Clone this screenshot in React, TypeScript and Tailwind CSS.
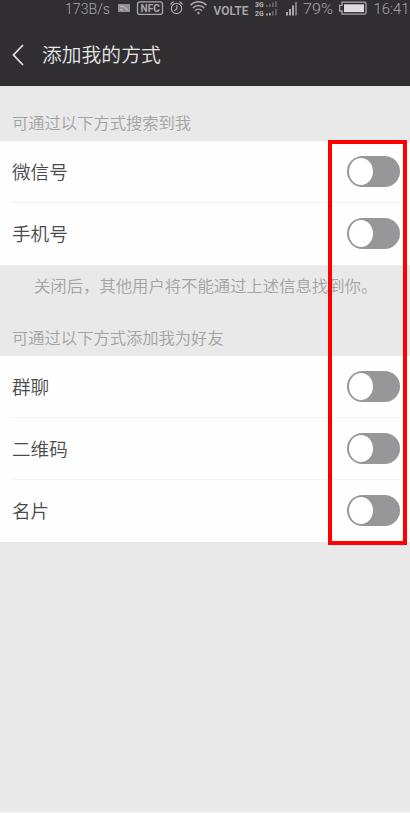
import React, { useState } from 'react';

const searchOptions = ['微信号', '手机号'];
const addOptions = ['群聊', '二维码', '名片'];

function StatusBar() {
  return (
    <div className="h-[19px] shrink-0">
      <svg className="block" width="410" height="19" viewBox="0 0 410 19" fill="none" fontFamily="Roboto, sans-serif">
        <text x="65" y="13.5" fontSize="15" fontWeight="300" fill="#a9a8aa" textLength="45" lengthAdjust="spacingAndGlyphs">173B/s</text>

        {/* cast */}
        <rect x="118" y="4" width="12" height="8" fill="#8f8e90" />
        <path d="M119.5 6l4 .5 5 4M119.5 9.5l3 .5" stroke="#c4c4c4" strokeWidth="1" />

        {/* nfc */}
        <rect x="137.5" y="1.8" width="25" height="12.6" rx="2.5" stroke="#a9a8aa" strokeWidth="1.3" />
        <text x="140.5" y="12" fontSize="10.5" fontWeight="700" fill="#a9a8aa" textLength="19.5" lengthAdjust="spacingAndGlyphs">NFC</text>

        {/* alarm */}
        <g stroke="#a9a8aa" strokeWidth="1.2" strokeLinecap="round">
          <circle cx="176.5" cy="8.5" r="5.2" />
          <path d="M176.8 5.5v3.4l-2.2 1.6M170.7 4.2l2.6-2.4M182.3 4.2l-2.6-2.4" />
        </g>

        {/* wifi */}
        <g stroke="#a9a8aa" strokeWidth="1.5">
          <path d="M190.5 5.2c4.5-4.5 11.5-4.5 16 0" />
          <path d="M192.8 8c3.2-3.2 8.2-3.2 11.4 0" />
          <path d="M195 10.7c2-2 5-2 7 0" />
          <circle cx="198.5" cy="13" r="1.2" fill="#a9a8aa" stroke="none" />
        </g>

        <text x="213.5" y="15" fontSize="12.5" fontWeight="600" fill="#a9a8aa" textLength="35" lengthAdjust="spacingAndGlyphs">VOLTE</text>

        {/* dual sim signal */}
        <g fill="#b9b8ba" fontSize="7.5" fontWeight="700">
          <text x="255" y="6.5" textLength="8.5" lengthAdjust="spacingAndGlyphs">3G</text>
          <text x="255" y="15.5" textLength="8.5" lengthAdjust="spacingAndGlyphs">2G</text>
        </g>
        <path d="M266 5h1.8v2h-1.8zM269 4h1.8v3h-1.8zM272 2.5h1.8v4.5h-1.8zM275 1h1.8v6h-1.8zM272 11h1.8v4.5h-1.8zM275 9h1.8v6.5h-1.8z" fill="#626164" />
        <path d="M266 13.5h1.8v2h-1.8zM269 13h1.8v2.5h-1.8z" fill="#a9a8aa" />

        <path d="M286 12h2v3.5h-2zM289 9h2v6.5h-2zM292 5.5h2v10h-2z" fill="#a9a8aa" />
        <path d="M295 2h2v13.5h-2z" fill="#7b7a7c" />
        <text x="303" y="13.5" fontSize="15" fontWeight="300" fill="#a9a8aa" textLength="30" lengthAdjust="spacingAndGlyphs">79%</text>

        {/* battery */}
        <path d="M342 2.2h22.5q1.5 0 1.5 1.5v9q0 1.5-1.5 1.5H342v-3.2h-2.3V5.4h2.3z" stroke="#a9a8aa" strokeWidth="1.3" />
        <rect x="344" y="4.3" width="20" height="7.8" fill="#dddcde" />

        <text x="373.5" y="13.5" fontSize="15" fontWeight="300" fill="#a9a8aa" textLength="36" lengthAdjust="spacingAndGlyphs">16:41</text>
      </svg>
    </div>
  );
}

function Toggle({ on, onClick }: { on: boolean; onClick: () => void }) {
  return (
    <button
      role="switch"
      aria-checked={on}
      onClick={onClick}
      className={`flex h-[31px] w-[53px] items-center rounded-full px-[2px] ${on ? 'justify-end bg-green-500' : 'bg-[#979698]'}`}
    >
      <span className="h-[27px] w-[24px] rounded-[50%] bg-white" />
    </button>
  );
}

function OptionList({ items }: { items: string[] }) {
  const [enabled, setEnabled] = useState<string[]>([]);

  const toggle = (item: string) => {
    setEnabled(enabled.includes(item) ? enabled.filter(i => i !== item) : [...enabled, item]);
  };

  return (
    <ul className="divide-y divide-[#f2f2f2] bg-[#fefefe]">
      {items.map(item => (
        <li key={item} className="ml-3 mr-[10px] flex h-[62px] items-center justify-between last:pb-px">
          <span className="text-[18.6px] leading-none text-[#4a4a4a]">{item}</span>
          <Toggle on={enabled.includes(item)} onClick={() => toggle(item)} />
        </li>
      ))}
    </ul>
  );
}

export default function App() {
  return (
    <div className="relative flex h-[813px] w-[410px] flex-col overflow-hidden border-b border-[#f8f8f8] bg-[#e9e9e9] font-['Noto_Sans_CJK_SC',sans-serif] font-[350]">
      <header className="flex h-[86px] shrink-0 flex-col bg-[#302e31]">
        <StatusBar />
        <div className="flex h-[72px] items-center pl-3">
          <svg className="mt-[5px] h-[22px] w-[12px]" viewBox="0 0 12 22" fill="none" stroke="#e0e0e0" strokeWidth="1.8">
            <path d="M11 1L1.5 11L11 21" />
          </svg>
          <h1 className="mt-[2px] ml-[18px] text-[19.8px] leading-none text-[#e6e6e6]">添加我的方式</h1>
        </div>
      </header>

      <h2 className="flex h-[55px] shrink-0 items-end px-3 pb-[11px] text-[16.3px] leading-none text-[#a3a3a3]">
        可通过以下方式搜索到我
      </h2>
      <OptionList items={searchOptions} />

      <p className="flex h-[42px] shrink-0 items-center pb-[2px] pl-[34px] text-[16.35px] leading-none whitespace-nowrap text-[#a3a3a3]">
        关闭后，其他用户将不能通过上述信息找到你。
      </p>
      <h2 className="flex h-[49px] shrink-0 items-end px-3 pb-[11px] text-[16.3px] leading-none text-[#a3a3a3]">
        可通过以下方式添加我为好友
      </h2>
      <OptionList items={addOptions} />

      {/* highlight around the switches */}
      <div className="pointer-events-none absolute top-[140px] left-[328px] h-[405px] w-[79px] border-4 border-[#fe0000]" />
    </div>
  );
}
